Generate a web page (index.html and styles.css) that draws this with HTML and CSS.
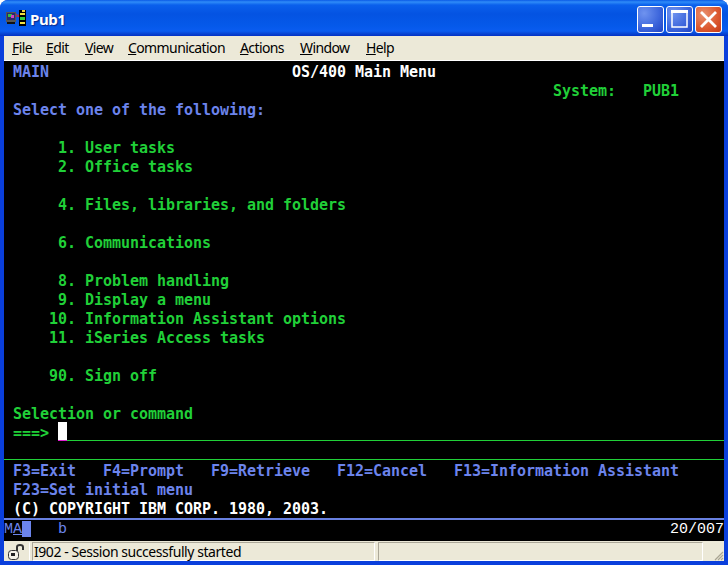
FILE: index.html
```html
<!DOCTYPE html>
<html lang="en">
<head>
<meta charset="utf-8">
<title>Pub1</title>
<link rel="stylesheet" href="styles.css">
</head>
<body>
<div class="window">
  <header class="titlebar">
    <svg class="app-icon" width="20" height="18" viewBox="0 0 20 18">
      <rect x="0" y="3" width="10" height="10" fill="#555"/>
      <rect x="1" y="4" width="8" height="7" fill="#2a2a6a"/>
      <rect x="2" y="5" width="4" height="3" fill="#30c040"/>
      <rect x="5" y="6" width="3" height="3" fill="#d040c0"/>
      <rect x="1" y="13" width="8" height="2" fill="#111"/>
      <path d="M10 8 L14 5 M10 5 L13 8" stroke="#e02020" stroke-width="1" fill="none"/>
      <rect x="13" y="1" width="7" height="16" fill="#000"/>
      <rect x="16" y="1" width="3" height="2" fill="#e8d040"/>
      <rect x="14" y="4" width="5" height="2" fill="#f0e040"/>
      <rect x="14" y="8" width="5" height="3" fill="#30d040"/>
      <rect x="14" y="13" width="5" height="2" fill="#f0e040"/>
    </svg>
    <span class="title">Pub1</span>
    <div class="win-buttons">
      <div class="win-btn blue">
        <svg width="25" height="25" viewBox="0 0 25 25"><rect x="4" y="17" width="11" height="3" fill="#fff"/></svg>
      </div>
      <div class="win-btn blue">
        <svg width="25" height="25" viewBox="0 0 25 25"><rect x="5" y="5" width="15" height="15" fill="none" stroke="#fff" stroke-width="1.5"/><rect x="4" y="3" width="17" height="3" fill="#fff"/></svg>
      </div>
      <div class="win-btn red">
        <svg width="25" height="25" viewBox="0 0 25 25"><path d="M5 5 L20 20 M20 5 L5 20" stroke="#fff" stroke-width="2.8" fill="none"/></svg>
      </div>
    </div>
  </header>
  <div class="client">
    <nav class="menubar">
      <span class="m-file"><u>F</u>ile</span>
      <span class="m-edit"><u>E</u>dit</span>
      <span class="m-view"><u>V</u>iew</span>
      <span class="m-comm"><u>C</u>ommunication</span>
      <span class="m-act"><u>A</u>ctions</span>
      <span class="m-win"><u>W</u>indow</span>
      <span class="m-help"><u>H</u>elp</span>
    </nav>
    <main class="terminal">
      <div class="row blue">MAIN                           <span class="white">OS/400 Main Menu</span></div>
      <div class="row green">                                                            System:   PUB1</div>
      <div class="row blue">Select one of the following:</div>
      <div class="row"></div>
      <div class="row green">     1. User tasks</div>
      <div class="row green">     2. Office tasks</div>
      <div class="row"></div>
      <div class="row green">     4. Files, libraries, and folders</div>
      <div class="row"></div>
      <div class="row green">     6. Communications</div>
      <div class="row"></div>
      <div class="row green">     8. Problem handling</div>
      <div class="row green">     9. Display a menu</div>
      <div class="row green">    10. Information Assistant options</div>
      <div class="row green">    11. iSeries Access tasks</div>
      <div class="row"></div>
      <div class="row green">    90. Sign off</div>
      <div class="row"></div>
      <div class="row green">Selection or command</div>
      <div class="row green input-row"><span class="prompt">===></span><span class="field"><span class="cursor"></span></span></div>
      <div class="row rule"></div>
      <div class="row blue">F3=Exit   F4=Prompt   F9=Retrieve   F12=Cancel   F13=Information Assistant</div>
      <div class="row blue">F23=Set initial menu</div>
      <div class="row white">(C) COPYRIGHT IBM CORP. 1980, 2003.</div>
    </main>
    <div class="oia">
      <span class="oia-m">M</span><span class="oia-a">A</span><span class="oia-block"></span><span class="oia-b">b</span>
      <span class="oia-pos">20/007</span>
    </div>
    <footer class="statusbar">
      <div class="panel panel-icon">
        <svg width="20" height="17" viewBox="0 0 20 17">
          <rect x="1.5" y="6.5" width="10" height="9" rx="3" fill="#f4f2e8" stroke="#333"/>
          <rect x="4" y="9" width="4" height="3" fill="#222"/>
          <path d="M10 7 V3 Q10 1 13 1 Q16 1 16 3 V6" fill="none" stroke="#333" stroke-width="2"/>
        </svg>
      </div>
      <div class="panel panel-msg">I902 - Session successfully started</div>
      <div class="panel panel-empty"></div>
      <div class="grip">
        <svg width="12" height="12" viewBox="0 0 12 12"><path d="M11 3 L3 11 M11 6 L6 11 M11 9 L9 11" stroke="#a9a593" stroke-width="1.2" fill="none"/></svg>
      </div>
    </footer>
  </div>
</div>
</body>
</html>
```
FILE: styles.css
```css
html, body {
  margin: 0;
  padding: 0;
  background: #fff;
}
.window {
  width: 728px;
  height: 565px;
  box-sizing: border-box;
  display: flex;
  flex-direction: column;
  border-radius: 8px 8px 0 0;
  background: #0a3fdc;
  overflow: hidden;
}
.titlebar {
  height: 36px;
  flex: none;
  box-sizing: border-box;
  padding: 7px 4px 0 6px;
  display: flex;
  align-items: flex-start;
  background: linear-gradient(#0a5ae6 0, #2f8cf8 2px, #0a60ec 5px, #0453e2 14px, #0559ea 26px, #0a5cf0 31px, #0843d0 34px, #0331c6 36px);
}
.app-icon {
  margin-top: 2px;
  flex: none;
}
.title {
  margin-left: 4px;
  margin-top: 1px;
  font: bold 15px/22px "Noto Sans", "Liberation Sans", sans-serif;
  letter-spacing: -0.4px;
  color: #fff;
  text-shadow: 1px 1px 1px #0a2a90;
}
.win-buttons {
  margin-left: auto;
  margin-right: 2px;
  display: flex;
  gap: 2px;
  margin-top: -1px;
}
.win-btn {
  width: 27px;
  height: 27px;
  box-sizing: border-box;
  border: 1px solid #fff;
  border-radius: 3px;
  display: flex;
  align-items: center;
  justify-content: center;
}
.win-btn.blue {
  background: radial-gradient(circle at 25% 25%, #6f93ef 0, #3f68dd 55%, #1f43c4 100%);
}
.win-btn.red {
  background: radial-gradient(circle at 30% 30%, #e9916f 0, #dd5b32 55%, #c63a17 100%);
}
.client {
  flex: 1;
  margin: 0 4px 4px;
  display: flex;
  flex-direction: column;
  min-height: 0;
}
.menubar {
  height: 25px;
  flex: none;
  box-sizing: border-box;
  padding-left: 8px;
  background: #ece9d8;
  border-bottom: 1px solid #fff;
  display: flex;
  font: 14px/24px "Noto Sans", sans-serif;
  letter-spacing: -0.6px;
  color: #000;
}
.m-file { width: 34px; }
.m-edit { width: 39px; }
.m-view { width: 43px; }
.m-comm { width: 112px; }
.m-act { width: 60px; }
.m-win { width: 66px; }
.terminal {
  height: 459px;
  flex: none;
  box-sizing: border-box;
  background: #000;
  border-bottom: 2px solid #6880e0;
  padding-left: 9px;
  font: bold 15px/23px "DejaVu Sans Mono", monospace;
  letter-spacing: -0.03px;
}
.row {
  height: 19px;
  white-space: pre;
}
.blue { color: #6c84ec; }
.green { color: #20d038; }
.white { color: #fff; }
.input-row {
  display: flex;
}
.prompt {
  width: 45px;
  flex: none;
}
.field {
  flex: 1;
  height: 19px;
  box-sizing: border-box;
  border-bottom: 1px solid #20d038;
}
.cursor {
  display: block;
  width: 9px;
  height: 19px;
  box-sizing: border-box;
  background: #fff;
  border-bottom: 1px solid #e020d0;
}
.rule {
  margin-left: -9px;
  box-sizing: border-box;
  border-bottom: 1px solid #20d038;
}
.oia {
  height: 21px;
  flex: none;
  background: #000;
  display: flex;
  align-items: flex-start;
  font: 15px/17px "Liberation Mono", monospace;
  color: #6c84ec;
  padding-top: 1px;
  box-sizing: border-box;
}
.oia-m, .oia-a {
  width: 9px;
  text-align: center;
}
.oia-a { text-decoration: underline; }
.oia-block {
  width: 9px;
  height: 16px;
  background: #6c84ec;
}
.oia-b {
  margin-left: 27px;
}
.oia-pos {
  margin-left: auto;
  color: #fff;
}
.statusbar {
  flex: 1;
  min-height: 0;
  background: #ece9d8;
  display: flex;
  padding-top: 1px;
  box-sizing: border-box;
  font: 14px/18px "Noto Sans", sans-serif;
  color: #000;
}
.panel {
  height: 19px;
  box-sizing: border-box;
  border: 1px solid;
  border-color: #aca899 #fff #fff #aca899;
  flex: none;
}
.panel-icon {
  width: 26px;
  margin-right: 2px;
  border-color: transparent #fff transparent transparent;
  padding: 1px 0 0 2px;
}
.panel-msg {
  width: 343px;
  margin-right: 3px;
  padding-left: 1px;
  letter-spacing: -0.44px;
}
.panel-empty {
  width: 325px;
}
.grip {
  flex: 1;
  display: flex;
  align-items: flex-end;
  justify-content: flex-end;
}
```
